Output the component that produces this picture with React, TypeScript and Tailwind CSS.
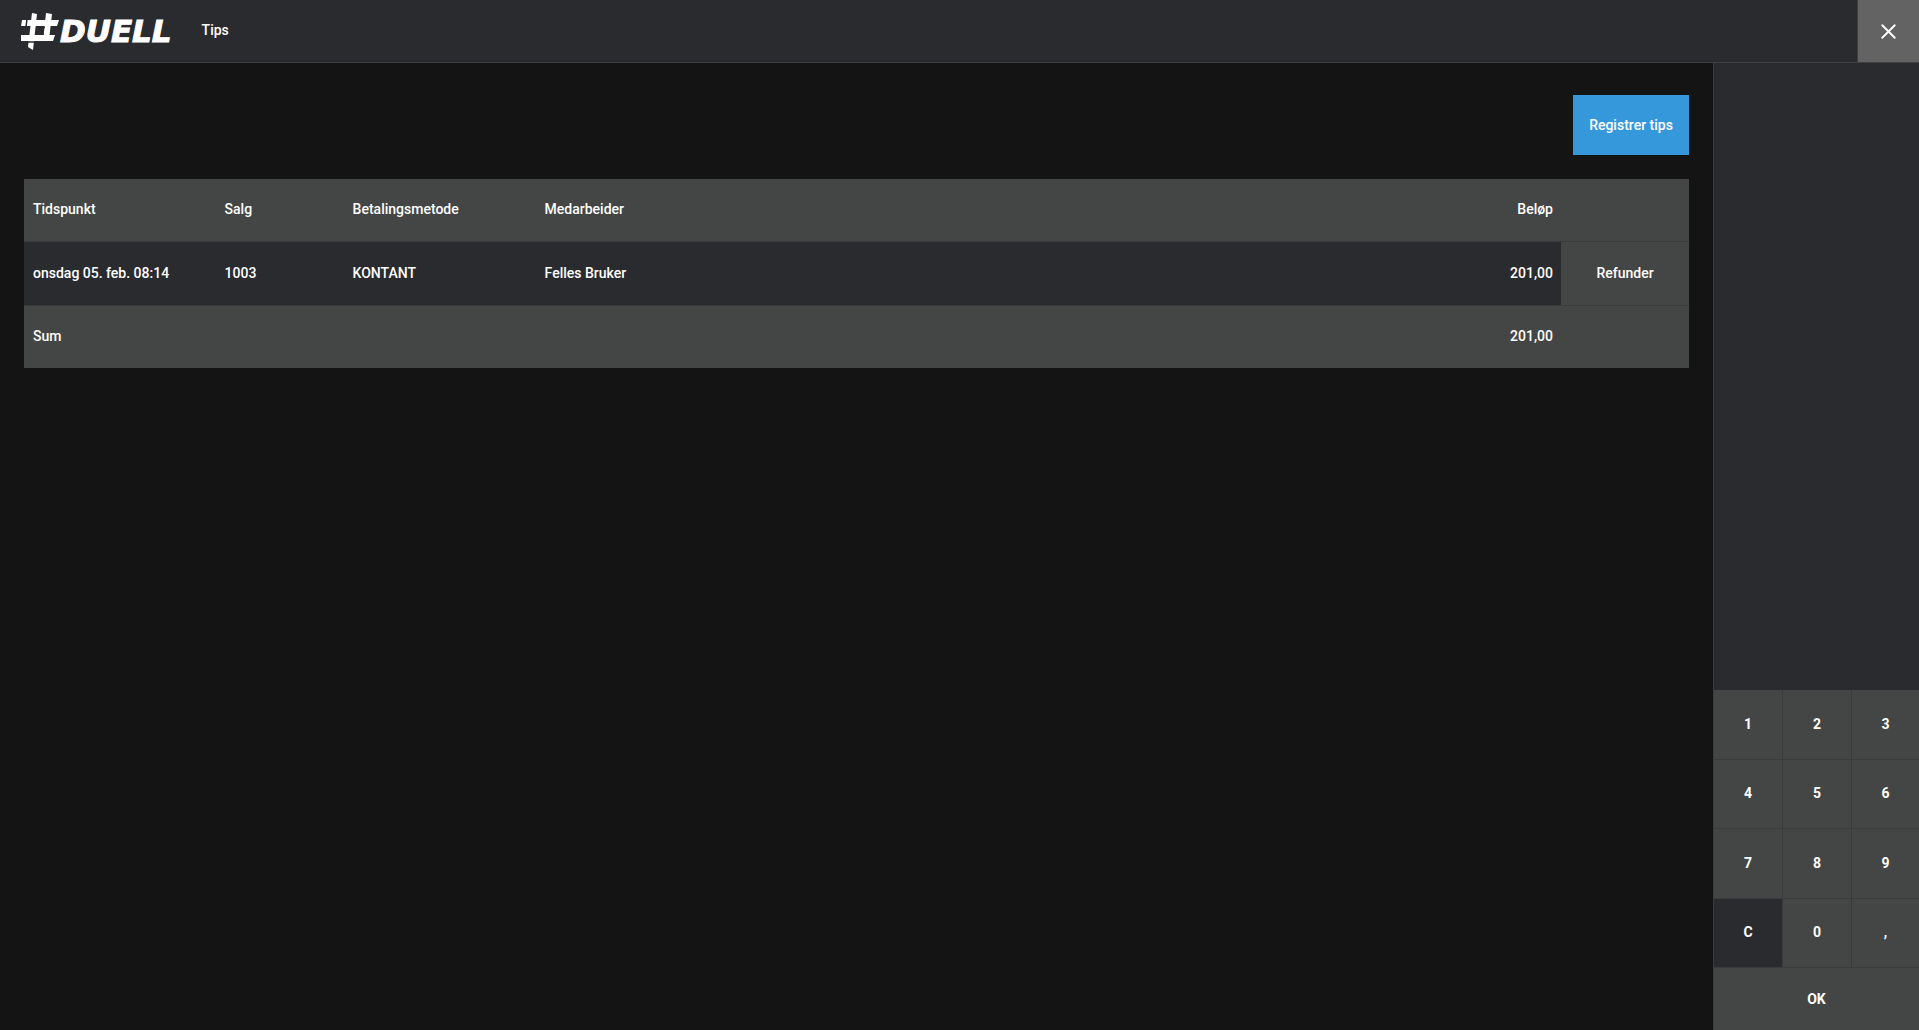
import { X } from "lucide-react";

const font = "font-['Roboto',sans-serif]";

const keys = ["1", "2", "3", "4", "5", "6", "7", "8", "9", "C", "0", ","];

function Logo() {
  return (
    <div className="flex items-center">
      <svg width="38" height="37" viewBox="0 0 38 37">
        <g fill="#fff">
          <polygon points="11,0 16,1 12,37 7,34" />
          <polygon points="25,0 31,1 28,27 22,28" />
          <polygon points="1,7 38,7 36,13 0,13" />
          <polygon points="0,22 34,22 32,28 0,28" />
        </g>
        <g stroke="#2a2b2f" strokeWidth="1.5">
          <line x1="6" y1="6" x2="5" y2="14" />
          <line x1="17" y1="14.5" x2="24" y2="14.5" />
          <line x1="16" y1="21" x2="23" y2="21" />
          <line x1="5" y1="29" x2="13" y2="29" />
        </g>
      </svg>
      <span className="ml-[1px] text-[31px] leading-none font-bold italic text-white [-webkit-text-stroke:1px_white] font-['DejaVu_Sans',sans-serif]">
        DUELL
      </span>
    </div>
  );
}

export default function App() {
  return (
    <div className={`flex h-[1030px] w-full flex-col overflow-hidden bg-[#141414] text-sm font-medium text-white ${font}`}>
      <header className="flex h-[63px] shrink-0 items-center border-b border-[#3e3f41] bg-[#2a2b2f] pl-[21px]">
        <Logo />
        <span className="ml-[30px] pb-[2px]">Tips</span>
        <button className="ml-auto flex h-full w-[62px] items-center justify-center border-l border-[#3e3f41] bg-[#636363]">
          <X size={25} strokeWidth={1.8} />
        </button>
      </header>

      <div className="flex min-h-0 flex-1">
        <main className="flex-1 px-6 pt-8">
          <div className="flex justify-end">
            <button className="h-[60px] w-[116px] bg-[#3498db]">Registrer tips</button>
          </div>

          <table className="mt-6 w-full table-fixed border-collapse">
            <thead>
              <tr className="h-[62px] bg-[#444645] text-left">
                <th className="w-[191.6px] pb-[2px] pl-[9px] font-medium">Tidspunkt</th>
                <th className="w-[128px] pb-[2px] pl-[9px] font-medium">Salg</th>
                <th className="w-[192px] pb-[2px] pl-[9px] font-medium">Betalingsmetode</th>
                <th className="pb-[2px] pl-[9px] font-medium">Medarbeider</th>
                <th className="w-[128px] pb-[2px] pr-2 text-right font-medium">Beløp</th>
                <th className="w-[128px]" />
              </tr>
            </thead>
            <tbody>
              <tr className="h-[64px] border-t border-[#3a3b3c] bg-[#2a2b2f]">
                <td className="pb-[1px] pl-[9px]">onsdag 05. feb. 08:14</td>
                <td className="pb-[1px] pl-[9px]">1003</td>
                <td className="pb-[1px] pl-[9px]">KONTANT</td>
                <td className="pb-[1px] pl-[9px]">Felles Bruker</td>
                <td className="pb-[1px] pr-2 text-right">201,00</td>
                <td className="bg-[#444645] pb-[1px] text-center">Refunder</td>
              </tr>
              <tr className="h-[63px] border-t border-[#3a3b3c] bg-[#444645]">
                <td className="pb-[2px] pl-[9px]">Sum</td>
                <td />
                <td />
                <td />
                <td className="pb-[2px] pr-2 text-right">201,00</td>
                <td />
              </tr>
            </tbody>
          </table>
        </main>

        <aside className="flex w-[206px] shrink-0 flex-col border-l border-[#3a3b3c] bg-[#2a2b2f]">
          <div className="flex-1" />
          <div className="grid grid-cols-[68px_68px_67px] grid-rows-[69px_68px_69px_68px] gap-px bg-[#3a3b3c]">
            {keys.map((k) => (
              <button
                key={k}
                className={`pb-[2px] font-bold ${k === "C" ? "bg-[#2a2b2f]" : "bg-[#444645]"}`}
              >
                {k}
              </button>
            ))}
          </div>
          <button className="h-[63px] border-t border-[#3a3b3c] bg-[#444645] font-bold">OK</button>
        </aside>
      </div>
    </div>
  );
}
